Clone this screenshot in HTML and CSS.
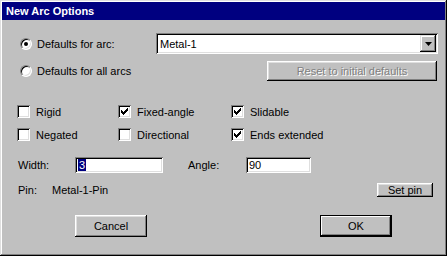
FILE: index.html
```html
<!DOCTYPE html>
<html lang="en">
  <head>
    <meta charset="UTF-8" />
    <title>New Arc Options</title>
    <link rel="stylesheet" href="styles.css">
  </head>
  <body>
    <div class="window">
      <div class="titlebar">New Arc Options</div>

      <div class="content">
        <div class="row">
          <div class="choice radio-choice">
            <span class="radio checked"></span>
            <span>Defaults for arc:</span>
          </div>
          <div class="select">
            <span class="select-value">Metal-1</span>
            <span class="select-arrow">
              <svg width="7" height="4" viewBox="0 0 7 4"><path d="M0 0h7L3.5 4z" fill="#000" /></svg>
            </span>
          </div>
        </div>

        <div class="row second">
          <div class="choice radio-choice">
            <span class="radio"></span>
            <span>Defaults for all arcs</span>
          </div>
          <button class="btn reset" disabled>Reset to initial defaults</button>
        </div>

        <div class="checks">
          <div class="choice"><span class="checkbox"></span><span>Rigid</span></div>
          <div class="choice"><span class="checkbox checked"></span><span>Fixed-angle</span></div>
          <div class="choice"><span class="checkbox checked"></span><span>Slidable</span></div>
          <div class="choice"><span class="checkbox"></span><span>Negated</span></div>
          <div class="choice"><span class="checkbox"></span><span>Directional</span></div>
          <div class="choice"><span class="checkbox checked"></span><span>Ends extended</span></div>
        </div>

        <div class="row fields">
          <span class="field-label">Width:</span>
          <div class="field width"><span class="selected">3</span></div>
          <span class="field-label angle-label">Angle:</span>
          <div class="field angle">90</div>
        </div>

        <div class="row pin">
          <span class="pin-label">Pin:</span>
          <span>Metal-1-Pin</span>
          <button class="btn set-pin">Set pin</button>
        </div>

        <div class="row actions">
          <button class="btn big">Cancel</button>
          <button class="btn big default">OK</button>
        </div>
      </div>
    </div>
  </body>
</html>
```

FILE: styles.css
```css
* {
  box-sizing: border-box;
}

html,
body {
  margin: 0;
  width: 100%;
  height: 100%;
  background-color: #c0c0c0;
}

body {
  font-family: "Liberation Sans", Arial, sans-serif;
  font-size: 11px;
  color: #000;
}

.window {
  width: 447px;
  height: 256px;
  padding: 2px;
  background-color: #c0c0c0;
  box-shadow: inset -1px -1px #000, inset 1px 1px #dfdfdf,
    inset -2px -2px #808080, inset 2px 2px #fff;
}

.titlebar {
  height: 18px;
  line-height: 18px;
  padding-left: 4px;
  background-color: #000080;
  color: #fff;
  font-weight: bold;
}

.content {
  padding: 13px 7px 0 15px;
}

.row {
  display: flex;
  align-items: center;
}

.choice {
  display: flex;
  align-items: center;
  gap: 6px;
}

.radio-choice {
  margin-left: 3px;
  gap: 5px;
}

.radio {
  position: relative;
  width: 12px;
  height: 12px;
  border-radius: 50%;
  background-color: #fff;
  border: 1px solid;
  border-color: #808080 #fff #fff #808080;
  box-shadow: inset 1px 1px #000, inset -1px -1px #dfdfdf;
}

.radio.checked::after {
  content: "";
  position: absolute;
  top: 3px;
  left: 3px;
  width: 4px;
  height: 4px;
  border-radius: 50%;
  background-color: #000;
}

.select {
  display: flex;
  align-items: center;
  margin-left: auto;
  width: 282px;
  height: 21px;
  padding: 2px;
  background-color: #fff;
  box-shadow: inset 1px 1px #808080, inset -1px -1px #fff,
    inset 2px 2px #000, inset -2px -2px #dfdfdf;
}

.select-value {
  flex: 1;
  padding-left: 2px;
}

.select-arrow {
  display: flex;
  align-items: center;
  justify-content: center;
  width: 16px;
  height: 17px;
  background-color: #c0c0c0;
  box-shadow: inset -1px -1px #000, inset 1px 1px #dfdfdf,
    inset -2px -2px #808080, inset 2px 2px #fff;
}

.second {
  margin-top: 7px;
}

.btn {
  padding: 0;
  border: none;
  font: inherit;
  color: #000;
  background-color: #c0c0c0;
  box-shadow: inset -1px -1px #000, inset 1px 1px #fff,
    inset -2px -2px #808080, inset 2px 2px #dfdfdf;
}

.reset {
  margin-left: auto;
  margin-right: 1px;
  width: 170px;
  height: 20px;
  color: #808080;
  text-shadow: 1px 1px #fff;
}

.checks {
  display: grid;
  grid-template-columns: 101px 113px auto;
  grid-auto-rows: 13px;
  row-gap: 10px;
  margin-top: 24px;
}

.checkbox {
  display: flex;
  align-items: center;
  justify-content: center;
  width: 13px;
  height: 13px;
  background-color: #fff;
  box-shadow: inset 1px 1px #808080, inset -1px -1px #fff,
    inset 2px 2px #000, inset -2px -2px #dfdfdf;
}

.checkbox.checked::after {
  content: "";
  width: 7px;
  height: 7px;
  background: url("data:image/svg+xml,%3Csvg xmlns='http://www.w3.org/2000/svg' width='7' height='7' viewBox='0 0 7 7'%3E%3Cpath d='M0 2h1v1h1v1h1V3h1V2h1V1h1V0h1v3H6v1H5v1H4v1H3v1H2V6H1V5H0z' fill='%23000'/%3E%3C/svg%3E") no-repeat;
}

.fields {
  margin-top: 16px;
  margin-left: 1px;
}

.field-label {
  width: 57px;
}

.angle-label {
  margin-left: 25px;
  width: 58px;
}

.field {
  display: flex;
  align-items: center;
  height: 16px;
  padding: 0 3px;
  background-color: #fff;
  box-shadow: inset 1px 1px #808080, inset -1px -1px #fff,
    inset 2px 2px #000, inset -2px -2px #dfdfdf;
}

.field.width {
  width: 88px;
}

.field.angle {
  width: 65px;
}

.selected {
  background-color: #000080;
  color: #fff;
  line-height: 12px;
  padding: 0 1px;
}

.pin {
  margin-top: 10px;
  margin-left: 1px;
}

.pin-label {
  width: 34px;
}

.set-pin {
  margin-left: auto;
  margin-right: 5px;
  width: 56px;
  height: 14px;
  line-height: 12px;
}

.actions {
  margin-top: 18px;
  padding-left: 58px;
  gap: 173px;
}

.big {
  width: 72px;
  height: 22px;
}

.default {
  outline: 1px solid #000;
  outline-offset: -1px;
  box-shadow: inset -2px -2px #000, inset 2px 2px #fff,
    inset -3px -3px #808080;
}
```
